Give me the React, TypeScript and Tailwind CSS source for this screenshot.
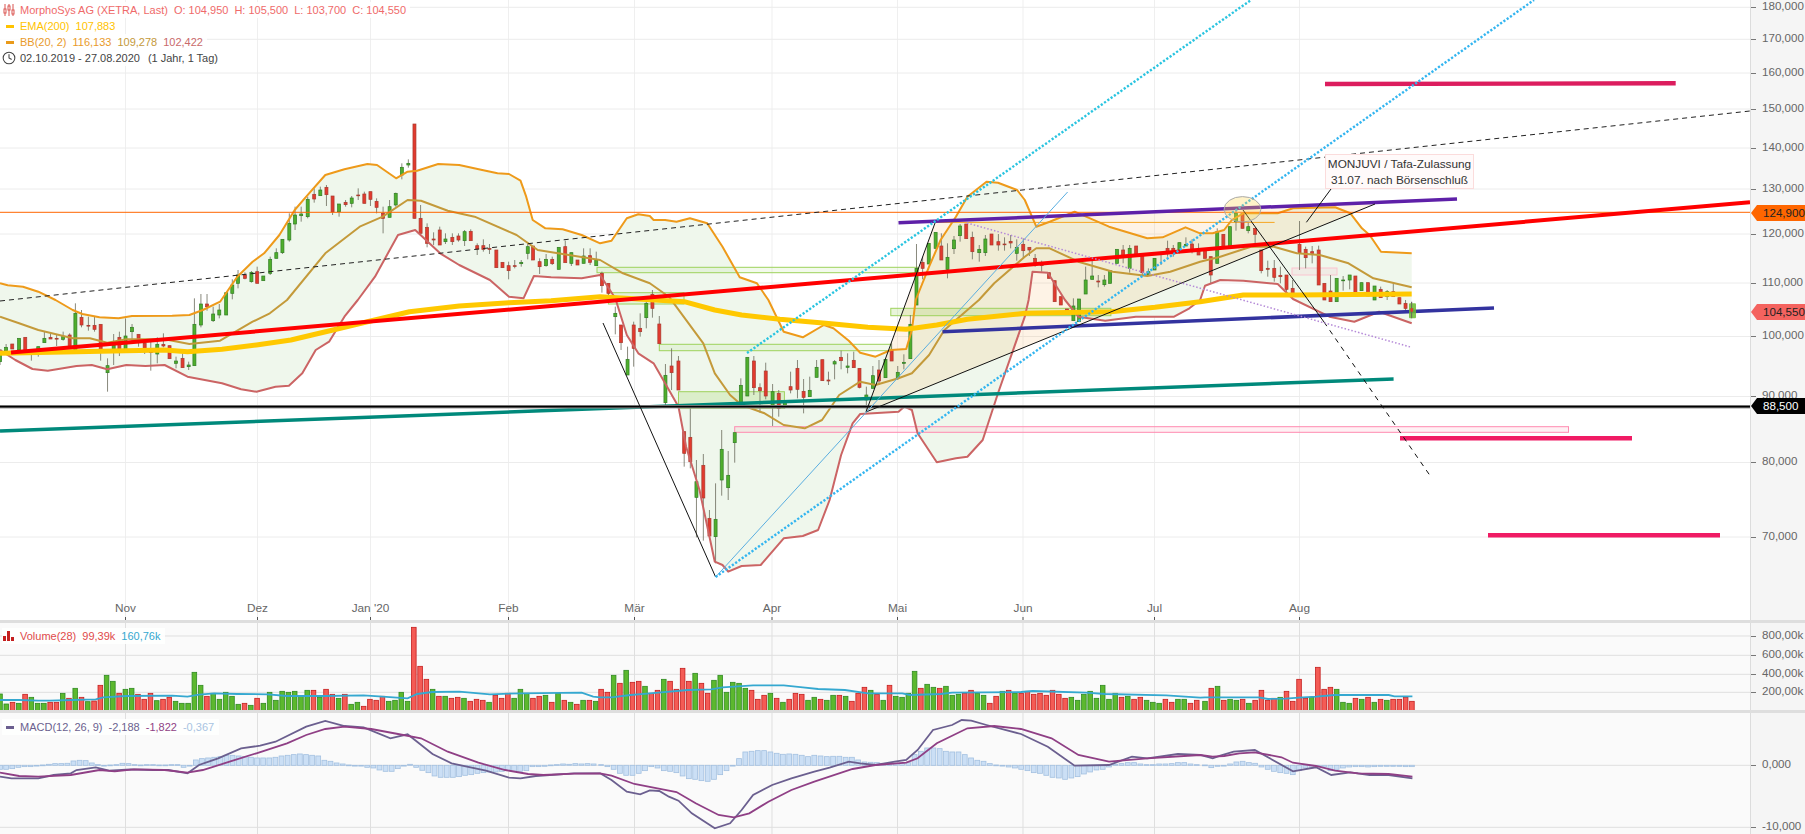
// MorphoSys chart - traced from the screenshot
import { Clock } from "lucide-react";

// Traced points are in crop space: x scaled 2.613, y scaled 3, with a crop origin
const XS = 2.613;
const STEP = 6.27;
const seg = (x0: number, y0: number, s: string) =>
    s.trim().split(/\s+/).map((p) => {
        const [x, y] = p.split(",").map(Number);
        return `${(x0 + x / XS).toFixed(1)},${(y0 + y / 3).toFixed(1)}`;
    });
const line = (...parts: string[][]) => parts.flat().join(" ");

const upper = [
    ...seg(0, 0, "0,850 20,856 60,860 100,875 145,900"),
    ...seg(0, 300, "190,30 215,42 260,52 310,55 345,48 450,47 495,45 530,30 575,5"),
    ...seg(0, 0, "620,830 660,785 690,760 730,705 770,630 800,590 850,525 900,508 960,492 985,495 1035,535 1065,515 1090,512 1145,492 1200,495 1260,510 1300,520 1330,522 1360,542 1375,590 1392,660 1425,685 1470,688 1520,705 1568,730"),
    ...seg(600, 0, "30,722 70,655 100,643 130,648 140,660 170,660 200,665 235,655 280,670 320,740 365,832 410,850 440,900"),
    ...seg(600, 300, "480,95 530,112 585,75 610,85 650,122 680,158 720,170 760,150 800,147 815,90 825,0"),
    ...seg(600, 0, "860,800 890,720 930,650 960,590 1010,545 1040,548 1090,570 1110,600 1140,680 1175,665 1240,635 1330,680 1430,715 1470,712 1530,682 1568,700"),
    ...seg(1205, 0, "20,700 50,690 70,660 100,640 190,640 230,625 340,622 380,640 410,685 430,705 460,755 540,760"),
];
const middle = [
    ...seg(0, 300, "0,50 50,70 100,90 190,115 235,115 280,128 330,118 430,118 495,132 575,122 660,65 705,40 750,0"),
    ...seg(0, 0, "850,760 940,680 1000,650 1065,600 1100,602 1170,632 1240,650 1350,705 1405,750 1568,780"),
    ...seg(600, 0, "60,820 130,850 180,890"),
    ...seg(600, 300, "270,130 300,220 340,285 370,315 430,340 480,375 535,385 580,360 625,285 680,245 720,255 780,235 815,220 860,165 900,90 990,0"),
    ...seg(600, 0, "1030,850 1110,770 1140,745 1175,745 1250,785 1340,815 1430,828 1490,815 1568,785"),
    ...seg(1205, 0, "40,770 120,740 180,740 240,760 300,765 375,790 440,835 540,862"),
];
const lower = [
    ...seg(0, 300, "0,150 40,180 85,207 125,212 200,198 240,195 280,208 330,195 380,198 430,195 490,230 580,250 630,268 670,275 720,260 755,257 790,220 825,150 860,125 900,50 935,0"),
    ...seg(0, 0, "980,830 1040,705 1085,690 1150,760 1200,795 1280,840 1330,890 1368,895 1395,828 1440,832 1520,835 1568,825"),
    ...seg(600, 0, "20,860 40,895"),
    ...seg(600, 300, "70,105 100,160 140,190 170,250 205,320 225,440 260,570 300,785 320,795 335,815 370,798 420,795 480,715 530,708 570,690 600,600 630,465 660,370 680,342 780,335 795,320 815,330 830,400 880,487 930,475 960,470 1000,420 1040,280 1110,50 1120,0"),
    ...seg(600, 0, "1130,815 1170,818 1215,900"),
    ...seg(600, 300, "1250,50 1320,62 1400,50 1500,50 1540,25 1568,0"),
    ...seg(1205, 0, "0,857 40,840 100,842 190,852 230,897"),
    ...seg(1205, 300, "325,50 390,65 455,35 540,70"),
];
const ema = [
    ...seg(0, 300, "0,160 200,155 330,152 430,150 490,155 580,148 670,135 760,120 870,90 960,65 1070,35 1200,18 1330,8 1440,2 1568,-10"),
    ...seg(600, 300, "220,5 300,30 370,45 470,58 590,70 700,82 800,88 880,75 960,58 1110,40 1335,35 1450,22 1568,5"),
    ...seg(1205, 0, "100,885 240,885 540,882"),
];

// [colour, crop x, body top, body bottom, high, low] - y values are 3x page y
type Candle = [string, number, number, number, number?, number?];
const candlesA: Candle[] = [
    ["g", 0, 1050, 1085, 1050, 1095], ["g", 16, 1042, 1052, 1032], ["r", 32, 1032, 1047], ["g", 50, 1015, 1050], ["r", 66, 1012, 1055],
    ["r", 82, 1052, 1058, 1052, 1082], ["g", 100, 1040, 1050, 1040, 1070], ["g", 116, 1015, 1028, 995], ["r", 132, 1012, 1017, 1000], ["r", 148, 1015, 1017, 1005, 1038],
    ["g", 165, 1010, 1018, 995, 1022], ["r", 182, 1005, 1042, 1000], ["g", 197, 940, 1050, 910], ["r", 213, 952, 975, 930, 982], ["r", 231, 976, 978, 950, 992],
    ["r", 247, 976, 988, 950, 995], ["r", 263, 973, 1050, 973, 1082], ["g", 281, 1097, 1118, 1075, 1175], ["g", 297, 1035, 1048, 1002, 1095], ["r", 312, 1012, 1048, 995, 1068],
    ["g", 328, 1008, 1048, 955], ["g", 345, 982, 995, 972, 1025], ["r", 362, 1003, 1028, 1003, 1040], ["r", 378, 1030, 1048, 1030, 1062], ["r", 394, 1055, 1058, 1025, 1112],
    ["g", 411, 1033, 1062, 1012, 1090], ["r", 427, 1033, 1038, 1000, 1042], ["r", 443, 1037, 1076], ["g", 460, 1083, 1090, 1070, 1105], ["r", 477, 1075, 1103, 1060],
    ["g", 493, 1095, 1100, 1085, 1110], ["g", 508, 973, 1097, 895], ["g", 525, 912, 975, 882, 982], ["r", 541, 912, 920, 882, 932], ["g", 557, 942, 962, 920, 966],
    ["g", 573, 930, 945, 912, 955], ["g", 591, 878, 945], ["g", 607, 855, 880, 838, 898], ["g", 622, 825, 850, 810, 865], ["r", 640, 825, 835, 817, 838],
    ["g", 657, 817, 845, 813, 848], ["r", 672, 815, 850, 800], ["g", 688, 828, 842], ["g", 706, 778, 820, 770, 825], ["g", 722, 758, 775, 745],
    ["g", 738, 718, 758, 718, 762], ["g", 756, 670, 720, 640, 725], ["g", 771, 645, 672, 620, 690], ["g", 787, 642, 647, 620, 665], ["g", 804, 598, 650, 590, 655],
    ["r", 821, 583, 597, 565, 608], ["g", 837, 570, 587, 560], ["r", 853, 562, 584, 555, 618], ["r", 869, 588, 636, 588, 645], ["g", 886, 612, 635, 612, 650],
    ["r", 903, 607, 614, 600, 620], ["g", 919, 594, 610, 588, 622], ["r", 936, 585, 587, 565, 600], ["r", 952, 582, 610, 575], ["r", 968, 575, 598, 575, 618],
    ["r", 984, 604, 622, 595, 640], ["r", 1001, 640, 655, 620, 700], ["g", 1018, 620, 652, 600], ["g", 1034, 580, 615, 578, 620], ["g", 1050, 502, 525, 490, 538],
    ["g", 1067, 490, 495, 478, 503], ["r", 1083, 372, 655], ["r", 1099, 655, 700, 615], ["r", 1116, 682, 730, 670, 742], ["r", 1133, 717, 720, 697, 735],
    ["r", 1149, 690, 735, 680], ["g", 1164, 717, 725, 700, 732], ["r", 1182, 712, 725, 700, 735], ["r", 1198, 708, 720, 700, 725], ["g", 1214, 695, 722, 690, 738],
    ["r", 1230, 694, 722, 688], ["r", 1247, 737, 747, 730, 765], ["r", 1263, 737, 748, 718, 755], ["r", 1279, 745, 748, 732, 762], ["r", 1297, 750, 803],
    ["r", 1313, 787, 803], ["r", 1329, 797, 812, 785, 838], ["r", 1345, 797, 799, 780, 805], ["g", 1362, 787, 791, 780, 800], ["g", 1379, 740, 760, 730, 778],
    ["r", 1393, 738, 780], ["r", 1410, 785, 800, 775, 822], ["g", 1427, 778, 797, 762, 800], ["r", 1443, 778, 791, 770, 795], ["g", 1460, 742, 808],
    ["r", 1477, 740, 788, 722], ["g", 1493, 758, 790, 758, 798], ["r", 1509, 780, 795], ["g", 1525, 768, 790, 745], ["r", 1542, 767, 787, 745, 795],
    ["g", 1558, 780, 797, 755],
];
const candlesB: Candle[] = [
    ["r", 5, 820, 857, 815, 878], ["r", 22, 850, 880, 850, 905], ["g", 40, 940, 950, 920, 1003], ["r", 55, 975, 1028, 975, 1050], ["g", 72, 1078, 1125, 1040],
    ["r", 88, 975, 1045, 965, 1100], ["r", 105, 985, 995, 940, 1010], ["g", 121, 910, 953, 905, 985], ["r", 137, 883, 925, 870, 953], ["r", 155, 972, 1031, 948],
    ["g", 171, 1126, 1208, 1092, 1215], ["r", 187, 1098, 1118, 1045, 1170], ["r", 205, 1083, 1170, 1068], ["r", 220, 1295, 1360, 1295, 1400], ["r", 236, 1312, 1385, 1225, 1405],
    ["g", 252, 1445, 1492, 1380, 1612], ["r", 270, 1396, 1494, 1362, 1622], ["r", 286, 1555, 1608, 1530], ["g", 302, 1558, 1610, 1450, 1690], ["g", 318, 1348, 1440, 1290, 1487],
    ["g", 335, 1426, 1463, 1353, 1500], ["g", 352, 1298, 1328, 1298, 1388], ["g", 368, 1156, 1212, 1135, 1222], ["g", 385, 1072, 1188], ["r", 402, 1083, 1163, 1068, 1185],
    ["r", 418, 1163, 1172, 1150, 1238], ["r", 433, 1113, 1188, 1088, 1198], ["g", 451, 1175, 1222, 1152, 1278], ["r", 467, 1180, 1225, 1170, 1250], ["g", 483, 1205, 1222, 1205, 1225],
    ["r", 498, 1160, 1170, 1115, 1180], ["r", 516, 1105, 1168, 1080, 1195], ["r", 532, 1174, 1192, 1137, 1240], ["g", 548, 1171, 1190, 1130], ["g", 566, 1102, 1132, 1080],
    ["r", 581, 1079, 1142], ["r", 597, 1140, 1143, 1115, 1155], ["g", 613, 1085, 1092, 1080, 1138], ["r", 630, 1072, 1082, 1052, 1108], ["g", 647, 1098, 1102, 1060, 1120],
    ["r", 663, 1081, 1103, 1055], ["r", 678, 1105, 1162, 1105, 1165], ["g", 696, 1185, 1200, 1160, 1235], ["g", 713, 1127, 1165, 1098], ["r", 729, 1110, 1143, 1080, 1155],
    ["g", 746, 1078, 1133], ["r", 762, 1050, 1083, 1030], ["g", 778, 1117, 1133, 1098, 1140], ["g", 794, 1087, 1090, 1063, 1108], ["g", 811, 973, 1076, 945],
    ["g", 827, 805, 915, 732], ["r", 843, 787, 805, 770, 838], ["g", 859, 730, 792], ["g", 877, 697, 745], ["r", 892, 738, 780, 700],
    ["g", 908, 772, 808, 730, 835], ["g", 925, 720, 746, 708, 762], ["g", 941, 678, 707, 672, 725], ["r", 957, 672, 716], ["r", 973, 712, 755, 695, 778],
    ["g", 991, 748, 758, 735, 785], ["g", 1007, 717, 758, 705, 768], ["r", 1023, 702, 735], ["r", 1041, 725, 735, 702, 752], ["r", 1057, 732, 734, 712, 752],
    ["r", 1073, 724, 729, 705, 745], ["g", 1089, 742, 760, 718, 782], ["r", 1106, 733, 752, 715, 775], ["r", 1122, 742, 750, 742, 768], ["r", 1137, 775, 795, 762, 800],
    ["r", 1154, 793, 797, 782, 815], ["r", 1173, 818, 835], ["r", 1188, 842, 905], ["r", 1204, 890, 915], ["r", 1220, 927, 940],
    ["g", 1237, 918, 962, 895], ["g", 1252, 897, 965], ["g", 1269, 840, 882, 800], ["g", 1286, 828, 838, 772], ["r", 1302, 843, 846, 825, 862],
    ["g", 1318, 840, 854, 825, 860], ["g", 1333, 812, 850, 810], ["g", 1351, 748, 790], ["r", 1367, 750, 770, 735, 790], ["g", 1384, 745, 805, 735, 818],
    ["r", 1401, 738, 765], ["r", 1417, 762, 818, 762, 825], ["g", 1433, 815, 825, 805], ["g", 1449, 775, 810], ["g", 1466, 758, 760, 755, 795],
    ["r", 1483, 745, 755, 722, 770], ["r", 1498, 745, 758, 735, 770], ["g", 1514, 728, 752, 728, 760], ["g", 1531, 733, 738, 712], ["r", 1547, 732, 750, 718, 760],
    ["r", 1564, 748, 765, 730],
];
const candlesC: Candle[] = [
    ["r", 0, 750, 775], ["r", 15, 770, 825, 770, 850], ["g", 32, 695, 790, 685], ["r", 48, 703, 740], ["g", 65, 680, 740], ["g", 81, 640, 665, 630, 692],
    ["r", 98, 640, 685], ["g", 113, 680, 692, 668, 700], ["r", 131, 685, 703, 685, 730], ["r", 147, 750, 812, 750, 820], ["r", 164, 805, 808, 782, 830],
    ["r", 181, 805, 832, 780, 845], ["r", 197, 826, 830, 800, 850], ["r", 213, 825, 868, 825, 885], ["r", 229, 865, 885, 840, 895], ["r", 247, 733, 758, 663, 810],
    ["r", 263, 748, 773, 740, 805], ["r", 280, 755, 760, 738, 790], ["r", 297, 750, 855, 737], ["r", 312, 850, 900], ["r", 328, 873, 905, 825], ["g", 344, 835, 905],
    ["g", 361, 840, 842, 828, 872], ["g", 378, 825, 840, 825, 868], ["r", 393, 828, 880], ["g", 409, 848, 872], ["r", 426, 848, 888], ["g", 443, 858, 900],
    ["r", 459, 868, 893, 860], ["g", 476, 875, 890, 870, 900], ["r", 492, 875, 890, 850], ["r", 508, 893, 912], ["r", 524, 910, 925, 900, 935], ["r", 540, 925, 935, 905, 955],
];

// Volume bar tops in crop y, green positive, red negative
const volA = [252, 282, -277, 280, -253, 262, 280, 280, -277, -277, 250, -265, 235, -262, 275, -273, -226, 196, 214, -250, 238, 235, -253, -268, -250, 272, -268, -262, 274, 280, 280, 187, 226, -259, 250, 268, 247, 259, 283, -280, 286, -265, 280, 247, 271, 244, 247, 244, 259, 241, -241, 262, -238, -253, 265, -253, 283, 277, -289, -268, -271, -259, 274, 271, 247, 274, -52, -169, -208, 238, -259, 259, -265, -262, 265, -274, -268, -271, 277, -256, -265, -250, 265, 238, 250, -265, -259, 256, -277, 250, -271, 277, -283, 271, -271, 274];
const volB = [-238, -247, 196, -220, 181, -217, -214, 229, -250, -241, 208, -214, -238, -175, -214, 190, -220, -250, 211, 196, 247, 217, 220, 235, -241, -268, -256, 250, -265, 277, -268, -250, -253, 271, 262, -268, 271, 256, -256, 259, -274, -250, -232, 241, -253, 271, -226, 259, 262, 250, 184, -235, 223, 232, -235, 229, 256, 253, -250, -241, 250, 256, -280, -259, 244, -241, 250, -250, -244, -253, -250, -256, -241, -253, -265, 262, 271, 253, 244, 265, 226, 268, 250, -262, 259, -268, -262, 271, 277, 280, -268, -277, 268, 268, -280, -271];
const volC = [274, -235, 229, -271, 268, 271, -268, 280, -271, -241, -271, -265, 262, -244, -274, -208, -265, 262, -172, -238, -232, 238, 277, 280, -265, 268, -262, 277, -268, 271, -268, -268, -262, -274];

// MACD histogram heights in crop y around the zero line
const histA = [-12, -12, -10, -6, -4, -4, -2, 1, 3, 5, 5, 6, 13, 15, 14, 7, 2, 0, 1, 2, 6, 5, 2, 1, 2, 2, 1, 1, 2, 2, -6, -1, 16, 20, 22, 24, 26, 30, 30, 28, 26, 24, 22, 22, 22, 24, 28, 30, 32, 34, 32, 30, 28, 15, 12, 7, 4, 1, 0, -2, -6, -8, -14, -18, -18, -10, -2, 3, -6, -15, -22, -32, -36, -36, -36, -34, -30, -28, -24, -22, -20, -20, -18, -15, -18, -18, -16, -4, -4, -3, 1, 2, 4, 3, 5, 4, 5, 4];
const histB = [2, -4, -12, -24, -30, -30, -24, -16, -4, -8, -16, -18, -22, -32, -40, -42, -46, -48, -42, -28, -16, 0, 20, 40, 42, 44, 44, 40, 36, 33, 34, 33, 30, 26, 30, 28, 26, 27, 27, 24, 24, 16, 10, 9, 8, 6, 6, 6, 6, 8, 32, 42, 52, 52, 50, 42, 40, 40, 32, 22, 15, 12, 5, 1, -1, -5, -8, -12, -16, -22, -24, -30, -36, -38, -42, -38, -34, -26, -20, -14, -12, -5, 3, 5, 8, 8, 4, 2, 2, 4, 4, 5, 8, 8, 4, 2];
const histC = [1, -7, -3, -1, 4, 10, 12, 8, 6, -5, -12, -18, -22, -24, -28, -16, -8, -6, -5, -5, -16, -12, -8, -5, -4, -4, -5, -4, -3, -3, -3, -3, -4, -4];

const volMa = line(
    seg(0, 610, "0,270 50,270 100,272 130,272 190,270 250,268 270,262 330,258 450,257 490,260 520,254 560,250 620,252 700,253 750,258 850,258 950,256 1000,260 1065,265 1090,252 1130,246 1200,245 1280,253 1360,250 1520,248 1550,260 1568,262"),
    seg(600, 610, "30,262 80,255 130,250 230,240 290,238 320,232 400,226 480,226 530,232 570,237 640,240 700,250 790,250 810,255 890,252 920,248 1100,246 1130,243 1270,248 1320,252 1480,256 1568,263"),
    seg(1205, 610, "0,262 140,262 165,267 210,266 245,263 290,260 340,255 480,255 495,259 542,259"),
);
const macd = line(
    seg(0, 610, "0,500 30,505 70,505 100,505 140,495 185,490 200,480 250,472 285,482 340,478 400,480 440,480 490,490 520,465 570,445 630,415 680,407 720,395 800,350 850,333 900,348 950,352 1020,385 1065,373 1090,395 1130,432 1180,460 1270,482 1330,503 1360,505 1400,498 1500,490 1568,490"),
    seg(600, 610, "30,510 70,545 105,553 130,541 155,543 180,560 205,572 240,610 300,655 340,640 370,600 400,555 450,525 500,505 560,485 600,473 650,455 680,460 720,465 770,455 800,450 830,420 870,360 920,345 945,330 970,332 1010,345 1100,372 1170,410 1240,467 1330,465 1390,440 1430,445 1510,432 1568,435"),
    seg(1205, 610, "20,445 40,437 75,425 130,420 230,484 290,472 330,495 380,487 430,495 480,495 542,505"),
);
const signal = line(
    seg(0, 610, "0,488 50,498 100,500 185,495 260,480 300,484 350,478 430,480 490,488 530,480 600,455 670,430 750,400 800,375 850,357 900,350 970,357 1040,372 1100,385 1170,425 1250,458 1320,480 1380,492 1420,495 1500,491 1568,490"),
    seg(600, 610, "30,497 90,522 150,535 200,546 250,580 310,615 350,622 390,610 440,575 500,540 560,515 660,477 720,465 800,458 830,445 880,400 960,355 1030,348 1100,357 1180,385 1250,435 1330,455 1430,445 1568,435"),
    seg(1205, 610, "20,440 50,438 90,430 130,427 200,442 230,458 290,468 340,482 400,490 480,492 542,500"),
);

const months = [
    { label: "Nov", x: 125.5 }, { label: "Dez", x: 257.5 }, { label: "Jan '20", x: 370.5 }, { label: "Feb", x: 508.5 }, { label: "Mär", x: 634.5 },
    { label: "Apr", x: 772 }, { label: "Mai", x: 897.5 }, { label: "Jun", x: 1023 }, { label: "Jul", x: 1154.5 }, { label: "Aug", x: 1299.5 },
];
const priceTicks = [
    { t: "180,000", y: 7.3 }, { t: "170,000", y: 39.3 }, { t: "160,000", y: 73 }, { t: "150,000", y: 109 }, { t: "140,000", y: 148 }, { t: "130,000", y: 189 },
    { t: "120,000", y: 234 }, { t: "110,000", y: 283 }, { t: "100,000", y: 336.5 }, { t: "90,000", y: 396.5 }, { t: "80,000", y: 462.5 }, { t: "70,000", y: 537 },
];
const volTicks = [{ t: "800,00k", y: 13 }, { t: "600,00k", y: 32.3 }, { t: "400,00k", y: 51.3 }, { t: "200,00k", y: 69.3 }];
const macdTicks = [{ t: "0,000", y: 52.3 }, { t: "-10,000", y: 114.3 }];

function Candles({ data, x0 }: { data: Candle[]; x0: number }) {
    return (
        <g>
            {data.map(([c, xz, top, bot, hi, lo], i) => {
                const x = x0 + xz / XS;
                return (
                    <g key={i}>
                        <line x1={x} x2={x} y1={(hi ?? top) / 3} y2={(lo ?? bot) / 3} stroke="#6b6b5c" strokeWidth="0.8" />
                        <rect
                            x={x - 1.5}
                            y={top / 3}
                            width="3"
                            height={Math.max((bot - top) / 3, 0.8)}
                            fill={c === "g" ? "#4fae2c" : "#e23a2e"}
                            stroke={c === "g" ? "#2f7d24" : "#a83a2e"}
                            strokeWidth="0.7"
                        />
                    </g>
                );
            })}
        </g>
    );
}

function VolBars({ data, x0 }: { data: number[]; x0: number }) {
    return (
        <g>
            {data.map((v, i) => {
                const top = 610 + Math.abs(v) / 3;
                return (
                    <rect
                        key={i}
                        x={x0 + i * STEP - 2.3}
                        y={top}
                        width="4.6"
                        height={710.5 - top}
                        fill={v > 0 ? "#5cb82e" : "#f45b55"}
                        stroke={v > 0 ? "#2f8a22" : "#c41e1e"}
                        strokeWidth="0.8"
                    />
                );
            })}
        </g>
    );
}

function HistBars({ data, x0, step }: { data: number[]; x0: number; step: number }) {
    return (
        <g>
            {data.map((h, i) => (
                <rect
                    key={i}
                    x={x0 + i * step - 2.4}
                    y={h > 0 ? 765.3 - h / 3 : 765.3}
                    width="4.8"
                    height={Math.max(Math.abs(h) / 3, 0.8)}
                    fill="#cbdff5"
                    stroke="#a3c0e0"
                    strokeWidth="0.8"
                />
            ))}
        </g>
    );
}

function GridX({ top, bottom, color }: { top: number; bottom: number; color: string }) {
    return (
        <g>
            {months.map((m) => (
                <line key={m.label} x1={m.x} x2={m.x} y1={top} y2={bottom} stroke={color} strokeWidth="1" />
            ))}
        </g>
    );
}

function AxisTicks({ ticks }: { ticks: { t: string; y: number }[] }) {
    return (
        <>
            {ticks.map((k) => (
                <div key={k.t} className="absolute left-0 flex items-center h-4 -translate-y-1/2" style={{ top: k.y - 1.5 }}>
                    <span className="w-[5px] h-px bg-[#777] mt-[3px]" />
                    <span className="ml-[6px] text-[#666] text-[11.6px] leading-4">{k.t}</span>
                </div>
            ))}
        </>
    );
}

function PriceTag({ text, y, className }: { text: string; y: number; className: string }) {
    return (
        <div
            className={`absolute left-0 w-[55px] h-4 pl-3 flex items-center text-[11.6px] leading-4 [clip-path:polygon(6px_0,100%_0,100%_100%,6px_100%,0_50%)] ${className}`}
            style={{ top: y }}
        >
            {text}
        </div>
    );
}

export default function App() {
    return (
        <div className="w-[1805px] h-[834px] overflow-hidden bg-white flex flex-col font-['Liberation_Sans',Arial,sans-serif] text-[11px]">
            {/* Kurs */}
            <div className="flex h-[620px]">
                <div className="relative w-[1750px]">
                    <svg width="1750" height="620" viewBox="0 0 1750 620" className="block">
                        <GridX top={0} bottom={620} color="#efefef" />
                        {priceTicks.map((k) => (
                            <line key={k.t} x1="0" x2="1750" y1={k.y} y2={k.y} stroke="#ececec" strokeWidth="1" />
                        ))}
                        {months.map((m) => (
                            <line key={m.label} x1={m.x} x2={m.x} y1="617" y2="620" stroke="#555" />
                        ))}

                        {/* Bollinger-Band */}
                        <polygon points={[...upper, ...[...lower].reverse()].join(" ")} fill="#eff7ec" />

                        {/* Zeichnungen */}
                        <polygon points="866,412 935,223 1375,204" fill="#f9a53a" fillOpacity="0.13" />
                        <rect x="597" y="267.3" width="321" height="5.4" fill="#8ccb45" fillOpacity="0.1" stroke="#9ed25c" />
                        <rect x="608.4" y="292.7" width="75.6" height="11.3" fill="#8ccb45" fillOpacity="0.1" stroke="#9ed25c" />
                        <rect x="659.3" y="344.3" width="231.7" height="6.4" fill="#8ccb45" fillOpacity="0.1" stroke="#9ed25c" />
                        <rect x="678.5" y="391.7" width="105.9" height="16.6" fill="#8ccb45" fillOpacity="0.2" stroke="#9ed25c" />
                        <rect x="890.8" y="308.3" width="220.1" height="7.4" fill="#8ccb45" fillOpacity="0.2" stroke="#9ed25c" />
                        <rect x="1292" y="268" width="45" height="7" fill="#ff8aa8" fillOpacity="0.1" stroke="#fbc4cf" />
                        <rect x="734.7" y="426.7" width="833.8" height="5.6" fill="#ff80a8" fillOpacity="0.12" stroke="#ff8ab0" />
                        <line x1="935" x2="1274.6" y1="222.4" y2="222.4" stroke="#f5a623" />

                        <Candles data={candlesA} x0={0} />
                        <Candles data={candlesB} x0={600} />
                        <Candles data={candlesC} x0={1205} />

                        <polyline points={upper.join(" ")} fill="none" stroke="#ee9a1a" strokeWidth="2" strokeLinejoin="round" />
                        <polyline points={middle.join(" ")} fill="none" stroke="#c49a3a" strokeWidth="2" strokeLinejoin="round" />
                        <polyline points={lower.join(" ")} fill="none" stroke="#cb6464" strokeWidth="2" strokeLinejoin="round" />
                        <polyline points={ema.join(" ")} fill="none" stroke="#ffc800" strokeWidth="5" strokeLinejoin="round" />

                        <line x1="0" x2="1750" y1="212.3" y2="212.3" stroke="#ff6600" />
                        <line x1="0" x2="1750" y1="301" y2="111" stroke="#222" strokeDasharray="5 4" />
                        <line x1="0" x2="1393.6" y1="431" y2="379" stroke="#00897b" strokeWidth="3.5" />
                        <line x1="11" x2="1750" y1="352.6" y2="202.3" stroke="#ff0000" strokeWidth="4" />
                        <line x1="0" x2="1750" y1="406.7" y2="406.7" stroke="#999" strokeWidth="3.5" />
                        <line x1="0" x2="1750" y1="406.7" y2="406.7" stroke="#000" strokeWidth="1.8" />

                        <line x1="898.5" x2="1457" y1="222.7" y2="199" stroke="#5e20a8" strokeWidth="3.5" />
                        <line x1="942.5" x2="1494" y1="331.7" y2="308" stroke="#33339f" strokeWidth="3.5" />
                        <line x1="1325" x2="1675.7" y1="84" y2="83.3" stroke="#dc1d5e" strokeWidth="4.4" />
                        <line x1="1400" x2="1632" y1="438.3" y2="438.3" stroke="#f01b64" strokeWidth="4.4" />
                        <line x1="1488" x2="1720" y1="535.3" y2="535.3" stroke="#f01b64" strokeWidth="4.4" />

                        <line x1="603" x2="715.6" y1="323" y2="577" stroke="#111" />
                        <line x1="866" x2="935" y1="412" y2="223" stroke="#111" />
                        <line x1="866" x2="1375" y1="412" y2="204" stroke="#111" />
                        <line x1="1243" x2="1324" y1="210" y2="322" stroke="#111" />
                        <line x1="1324" x2="1431" y1="322" y2="477" stroke="#111" strokeDasharray="5 5" />
                        <line x1="715.6" x2="1067.6" y1="577" y2="192" stroke="#5aaee0" />
                        <line x1="715.6" x2="1534" y1="577" y2="0" stroke="#33b5f0" strokeWidth="2.4" strokeDasharray="2.2 1.8" />
                        <line x1="747" x2="1251" y1="353" y2="0" stroke="#29c4e0" strokeWidth="2.4" strokeDasharray="2.2 1.8" />
                        <line x1="967" x2="1411.6" y1="223" y2="347.3" stroke="#b58ad8" strokeWidth="1.5" strokeDasharray="1.5 2" />
                        <line x1="1331" x2="1306.4" y1="189" y2="222.3" stroke="#111" />

                        <ellipse cx="1242.5" cy="209.3" rx="18.4" ry="12.7" fill="#ffd84a" fillOpacity="0.3" stroke="#aaa" />
                        <rect x="1409" y="303.3" width="7" height="15" rx="1" fill="#6cbb2f" fillOpacity="0.85" />
                        <line x1="1411.6" x2="1411.6" y1="302" y2="318" stroke="#6b6b5c" />
                        <rect x="1410.4" y="308.3" width="2.6" height="3.4" fill="#e23a2e" />
                    </svg>

                    {/* Legende */}
                    <div className="absolute left-0 top-[2px] flex flex-col items-start">
                        <div className="h-4 pr-1 flex items-center gap-[6px] bg-white/90 text-[#ef6a6a] leading-4">
                            <svg width="12" height="12" viewBox="0 0 12 12" className="ml-[3px] mr-[-1px]" fill="none" stroke="#d9534f" strokeWidth="1">
                                <path d="M2 0v12M6 0v12M10 0v12" />
                                <rect x="1" y="5" width="2" height="4" fill="#fff" />
                                <rect x="5" y="2" width="2" height="4" fill="#fff" />
                                <rect x="9" y="6" width="2" height="4" fill="#fff" />
                            </svg>
                            <span>MorphoSys AG (XETRA, Last)</span>
                            <span>O: 104,950</span>
                            <span>H: 105,500</span>
                            <span>L: 103,700</span>
                            <span>C: 104,550</span>
                        </div>
                        <div className="h-4 pr-1 flex items-center gap-[6px] bg-white/90 text-[#ffc300] leading-4">
                            <span className="ml-[6px] w-2 h-[3px] bg-[#ffc300]" />
                            <span>EMA(200)</span>
                            <span>107,883</span>
                        </div>
                        <div className="h-4 pr-1 flex items-center gap-[6px] bg-white/90 text-[#e99a2a] leading-4">
                            <span className="ml-[6px] w-2 h-[3px] bg-[#e99a1a]" />
                            <span>BB(20, 2)</span>
                            <span>116,133</span>
                            <span className="text-[#c49a3a]">109,278</span>
                            <span className="text-[#c96a6a]">102,422</span>
                        </div>
                        <div className="h-4 pr-1 flex items-center gap-[6px] bg-white/90 text-[#444] leading-4">
                            <Clock size={14} strokeWidth={1.8} className="ml-[2px] mr-[-2px]" />
                            <span className="mr-[2px]">02.10.2019 - 27.08.2020</span>
                            <span>(1 Jahr, 1 Tag)</span>
                        </div>
                    </div>

                    {/* Notiz */}
                    <div className="absolute left-[1325px] top-[154px] w-[149px] h-[35px] border border-[#fbdcdc] bg-[#fffafa] text-[#333] text-[11.8px] text-center leading-4 py-[1px]">
                        MONJUVI / Tafa-Zulassung
                        <br />
                        31.07. nach Börsenschluß
                    </div>

                    {/* Monate */}
                    {months.map((m) => (
                        <span key={m.label} className="absolute top-[600px] leading-4 text-[#666] text-[11.8px] -translate-x-1/2" style={{ left: m.x }}>
                            {m.label}
                        </span>
                    ))}
                </div>
                <div className="relative w-[55px] bg-[#f5f5f5] border-l border-[#dcdcdc]">
                    <AxisTicks ticks={priceTicks} />
                    <PriceTag text="124,900" y={205} className="bg-[#ff6600] text-[#222]" />
                    <PriceTag text="104,550" y={304} className="bg-[#f4635f] text-[#222]" />
                    <PriceTag text="88,500" y={398} className="bg-black text-white" />
                </div>
            </div>
            <div className="h-[3px] bg-[#dedede]" />

            {/* Volumen */}
            <div className="flex h-[87px] bg-[#fafafa]">
                <div className="relative w-[1750px]">
                    <svg width="1750" height="87" viewBox="0 623 1750 87" className="block">
                        <GridX top={623} bottom={710} color="#dfdfdf" />
                        {volTicks.map((k) => (
                            <line key={k.t} x1="0" x2="1750" y1={623 + k.y} y2={623 + k.y} stroke="#dfdfdf" />
                        ))}
                        <VolBars data={volA} x0={0} />
                        <VolBars data={volB} x0={601.1} />
                        <VolBars data={volC} x0={1205} />
                        <polyline points={volMa} fill="none" stroke="#35a8d0" strokeWidth="1.8" />
                    </svg>
                    <div className="absolute left-[2px] top-[5px] h-4 pr-[5px] flex items-center gap-[6px] bg-white/90 leading-4">
                        <svg width="12" height="10" viewBox="0 0 12 10" className="ml-[1px] mr-[-1px]" fill="#c41e1e">
                            <rect x="0" y="5" width="3" height="5" />
                            <rect x="4" y="0" width="3" height="10" />
                            <rect x="8" y="6" width="3" height="4" />
                        </svg>
                        <span className="text-[#e04a4a]">Volume(28)</span>
                        <span className="text-[#e04a4a]">99,39k</span>
                        <span className="text-[#35a8d0]">160,76k</span>
                    </div>
                </div>
                <div className="relative w-[55px] bg-[#f5f5f5] border-l border-[#dcdcdc]">
                    <AxisTicks ticks={volTicks} />
                </div>
            </div>
            <div className="h-[3px] bg-[#dedede]" />

            {/* MACD */}
            <div className="flex flex-1 bg-[#fafafa]">
                <div className="relative w-[1750px]">
                    <svg width="1750" height="121" viewBox="0 713 1750 121" className="block">
                        <GridX top={713} bottom={834} color="#dfdfdf" />
                        <line x1="0" x2="1750" y1="765.3" y2="765.3" stroke="#dfdfdf" />
                        <line x1="0" x2="1750" y1="827.3" y2="827.3" stroke="#dfdfdf" />
                        <HistBars data={histA} x0={0} step={6.12} />
                        <HistBars data={histB} x0={601.1} step={STEP} />
                        <HistBars data={histC} x0={1205} step={STEP} />
                        <polyline points={macd} fill="none" stroke="#6b5f8f" strokeWidth="1.8" />
                        <polyline points={signal} fill="none" stroke="#8f3f85" strokeWidth="1.8" />
                    </svg>
                    <div className="absolute left-[2px] top-[6px] h-4 pr-[5px] flex items-center gap-[6px] bg-white/90 leading-4">
                        <span className="ml-1 w-2 h-[3px] bg-[#6b5f8f]" />
                        <span className="text-[#6b5f8f]">MACD(12, 26, 9)</span>
                        <span className="text-[#6b5f8f]">-2,188</span>
                        <span className="text-[#8f3f85]">-1,822</span>
                        <span className="text-[#a9c4e2]">-0,367</span>
                    </div>
                </div>
                <div className="relative w-[55px] bg-[#f5f5f5] border-l border-[#dcdcdc]">
                    <AxisTicks ticks={macdTicks} />
                </div>
            </div>
        </div>
    );
}
